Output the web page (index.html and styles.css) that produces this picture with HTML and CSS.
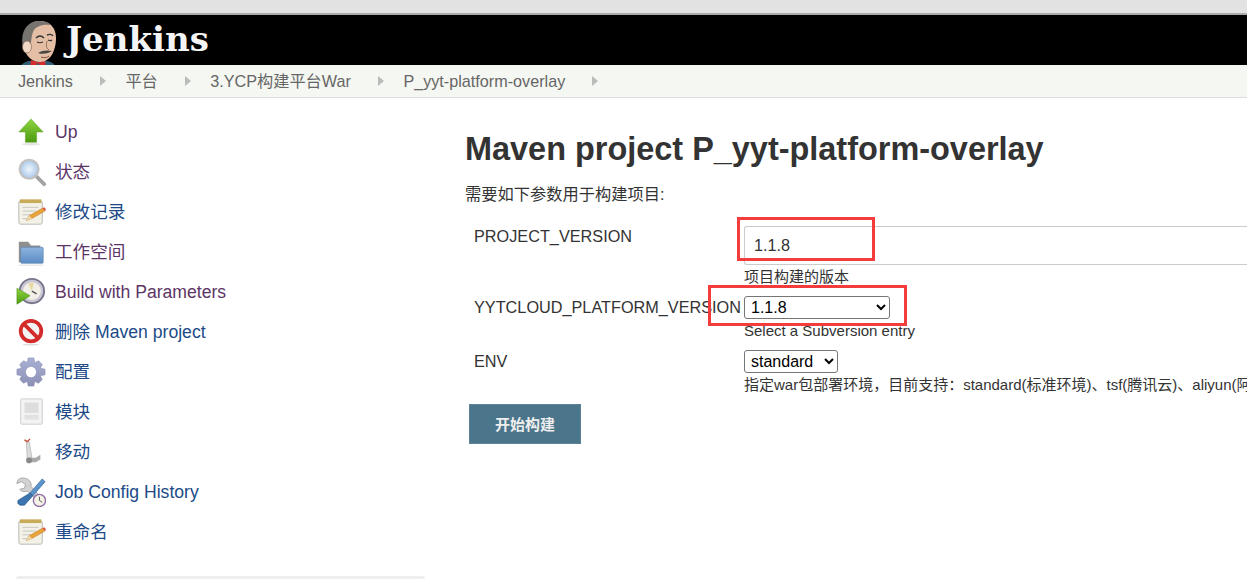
FILE: index.html
```html
<!DOCTYPE html>
<html lang="en">
<head>
  <meta charset="UTF-8" />
  <title>P_yyt-platform-overlay [Jenkins]</title>
  <link rel="stylesheet" href="styles.css">
</head>
<body>
  <div class="chrome"></div>
  <header class="header">
    <svg class="butler" width="40" height="50" viewBox="0 0 40 50">
      <path d="M0 50c0-6 5-9 10-10h18c6 1 9 4 10 10z" fill="#2f5f78"/>
      <path d="M12 39l-1 7 7-2.500 1-2 1 2 7 2.500-1-7-7 2z" fill="#d22d2d"/>
      <path d="M4 20C4 7 11 0 21 0c10 0 16 7 16 17 0 13-6 24-16 24S4 32 4 20z" fill="#e4bfa6"/>
      <path d="M4 26C1 12 7 1 19 0c5 0 10 1 13 4-8-1-14 1-17 5-3 5-2 10-4 17-2 1-5 1-7 0z" fill="#77736f"/>
      <ellipse cx="8" cy="26" rx="4.500" ry="6" fill="#f2d8c6" stroke="#8a6a58" stroke-width=".7"/>
      <path d="M17 17c3-3 6-2 8 0M28 14c2-1 5-1 6 1" fill="none" stroke="#333" stroke-width="1.400"/>
      <path d="M18 21c2 1 4 1 6 0M29 19c2 1 3 1 4 0" fill="none" stroke="#333" stroke-width="1.200"/>
      <path d="M28 20c-1 4-1 7 2 9" fill="none" stroke="#9a6d58" stroke-width="1"/>
      <path d="M19 32c4-3 10-3 14-2-3 2-9 4-14 2z" fill="#4a4644"/>
      <path d="M22 36c3 1 6 1 8-1" fill="none" stroke="#7a4a3a" stroke-width="1"/>
    </svg>
    <span class="brand">Jenkins</span>
  </header>
  <nav class="crumbs">
    <a class="crumb" href="#">Jenkins</a><span class="sep"></span>
    <a class="crumb" href="#">平台</a><span class="sep"></span>
    <a class="crumb" href="#">3.YCP构建平台War</a><span class="sep"></span>
    <a class="crumb" href="#">P_yyt-platform-overlay</a><span class="sep"></span>
  </nav>

  <div class="layout">
    <aside class="side">
      <svg class="defs" width="0" height="0">
        <defs>
          <linearGradient id="green" x1="0" y1="0" x2="0" y2="1"><stop offset="0" stop-color="#8fd63f"/><stop offset="1" stop-color="#4c9a12"/></linearGradient>
          <linearGradient id="blue" x1="0" y1="0" x2="0" y2="1"><stop offset="0" stop-color="#8db4de"/><stop offset="1" stop-color="#5a8cc4"/></linearGradient>
          <radialGradient id="lens"><stop offset="0" stop-color="#eef5fc"/><stop offset="1" stop-color="#a9c8ea"/></radialGradient>
          <linearGradient id="gear" x1="0" y1="0" x2="0" y2="1"><stop offset="0" stop-color="#aab0d6"/><stop offset="1" stop-color="#8d90b4"/></linearGradient>
          <g id="notepad">
            <rect x="3" y="4" width="25" height="25" rx="2" fill="#f4f2e8" stroke="#b5b5b0"/>
            <rect x="4" y="2.500" width="23" height="4" fill="#c9ac5a"/>
            <path d="M7 11h17M7 15h14M7 19h9M7 23h5" stroke="#c4c4bc"/>
            <path d="M11 25l3-5 14-8 3 3-14 8z" fill="#e8a33a" stroke="#b97d20" stroke-width=".5"/>
            <path d="M11 25l3-5 3 3z" fill="#f3d9b0"/>
            <path d="M28 12l3 3 1-2-2-2z" fill="#d9533c"/>
          </g>
        </defs>
      </svg>
      <ul class="tasks">
        <li class="task">
          <svg class="ico" viewBox="0 0 32 32"><path d="M16 2L29 16h-7v11H10V16H3z" fill="url(#green)" stroke="#5c9c1e" stroke-width=".5"/><ellipse cx="16" cy="29" rx="10" ry="1.300" fill="#e4e4e4"/></svg>
          <a class="visited" href="#">Up</a>
        </li>
        <li class="task">
          <svg class="ico" viewBox="0 0 32 32"><path d="M22 21l8 8" stroke="#a3a3a3" stroke-width="4" stroke-linecap="round"/><circle cx="14" cy="13" r="10" fill="url(#lens)" stroke="#c2c2c2" stroke-width="2.500"/></svg>
          <a class="visited" href="#">状态</a>
        </li>
        <li class="task">
          <svg class="ico" viewBox="0 0 32 32"><use href="#notepad"/></svg>
          <a href="#">修改记录</a>
        </li>
        <li class="task">
          <svg class="ico" viewBox="0 0 32 32"><path d="M3 5h10l3 4h10v4H12v14H3z" fill="#8f8f8f"/><rect x="5" y="11" width="24" height="17" rx="1" fill="url(#blue)" stroke="#5b86b5" stroke-width=".7"/><path d="M3 30h26" stroke="#ddd"/></svg>
          <a class="visited" href="#">工作空间</a>
        </li>
        <li class="task">
          <svg class="ico" viewBox="0 0 32 32"><circle cx="17" cy="15" r="13" fill="#c9c6d6" stroke="#77748a" stroke-width="2"/><circle cx="17" cy="15" r="9.500" fill="#f2f0e6"/><path d="M17 15l-4-8 6-1z" fill="#e8d9a0"/><path d="M17 15l5 3" stroke="#555" stroke-width="1.500"/><path d="M1 12l14 8-14 9z" fill="url(#green)" stroke="#4b8f14" stroke-width=".6"/></svg>
          <a class="visited" href="#">Build with Parameters</a>
        </li>
        <li class="task">
          <svg class="ico" viewBox="0 0 32 32"><circle cx="16" cy="15" r="11" fill="#f4f4f4" stroke="#d42a2a" stroke-width="4"/><path d="M8 7l16 16" stroke="#d42a2a" stroke-width="4"/><ellipse cx="16" cy="29.500" rx="9" ry="1" fill="#ddd"/></svg>
          <a href="#">删除 Maven project</a>
        </li>
        <li class="task">
          <svg class="ico" viewBox="0 0 32 32"><path d="M13 1h6l1 5 4-2 4 4-2 4 5 1v6l-5 1 2 4-4 4-4-2-1 5h-6l-1-5-4 2-4-4 2-4-5-1v-6l5-1-2-4 4-4 4 2z" fill="url(#gear)" stroke="#8488b0" stroke-width=".6"/><circle cx="16" cy="16" r="5.500" fill="#fff"/></svg>
          <a href="#">配置</a>
        </li>
        <li class="task">
          <svg class="ico" viewBox="0 0 32 32"><rect x="5" y="2" width="23" height="27" rx="1" fill="#f3f3f3" stroke="#ccc"/><rect x="9" y="6" width="15" height="11" fill="#ddd"/><rect x="9" y="19" width="15" height="5" fill="#e2e2e2"/></svg>
          <a href="#">模块</a>
        </li>
        <li class="task">
          <svg class="ico" viewBox="0 0 32 32"><path d="M11 5l3 0 3 17h-5z" fill="#ddd" stroke="#aaa" stroke-width=".7"/><path d="M9 3l3 2 3-3" fill="none" stroke="#c8503c" stroke-width="1.500"/><path d="M11 22h10l5-3v5l-5 3H11z" fill="#aaa"/><circle cx="14" cy="25" r="3" fill="#888"/></svg>
          <a href="#">移动</a>
        </li>
        <li class="task">
          <svg class="ico" viewBox="0 0 32 32"><path d="M7 1C3 1 1 4 1 7l5-2 4 3-1 4-5 1c2 3 5 3 8 2l12 11 3-4-11-12c1-4-2-9-9-9z" fill="#d2d2d2" stroke="#8c8c8c" stroke-width=".7"/><path d="M28 2l3 3-13 15-3-3z" fill="#5a94cc" stroke="#2f5f90" stroke-width=".7"/><path d="M15 17l3 3-9 10H4l-2-2v-3z" fill="#3c75b0" stroke="#27527f" stroke-width=".7"/><circle cx="25" cy="25" r="6.500" fill="#f5f2e5" stroke="#8f6ca8" stroke-width="1.500"/><path d="M25 21v4l3 2" fill="none" stroke="#555"/></svg>
          <a href="#">Job Config History</a>
        </li>
        <li class="task">
          <svg class="ico" viewBox="0 0 32 32"><use href="#notepad"/></svg>
          <a href="#">重命名</a>
        </li>
      </ul>
      <div class="side-box"></div>
    </aside>

    <main class="main">
      <h1 class="title">Maven project P_yyt-platform-overlay</h1>
      <p class="lead">需要如下参数用于构建项目:</p>
      <div class="params">
        <div class="param-name">PROJECT_VERSION</div>
        <div class="param-value">
          <input class="text-input" type="text" value="1.1.8">
          <div class="help help-first">项目构建的版本</div>
        </div>
        <div class="param-name name-second">YYTCLOUD_PLATFORM_VERSION</div>
        <div class="param-value">
          <select class="pick pick-wide"><option>1.1.8</option></select>
          <div class="help help-first">Select a Subversion entry</div>
        </div>
        <div class="param-name name-third">ENV</div>
        <div class="param-value">
          <select class="pick pick-env"><option>standard</option></select>
          <div class="help help-first nowrap">指定war包部署环境，目前支持：standard(标准环境)、tsf(腾讯云)、aliyun(阿里云)</div>
        </div>
      </div>
      <button class="build" type="button">开始构建</button>
    </main>
  </div>

  <!-- annotations drawn over the screenshot -->
  <div class="mark mark-input"></div>
  <div class="mark mark-select"></div>
</body>
</html>
```

FILE: styles.css
```css
html, body {
  height: 100%;
}
body {
  position: relative;
  margin: 0;
  overflow: hidden;
  background: #fff;
  color: #333;
  font-family: "Liberation Sans", "Noto Sans CJK SC", sans-serif;
  font-size: 16.25px;
}
.chrome {
  height: 13px;
  background: #e2e2e2;
  border-bottom: 2px solid #aaa;
}
.header {
  display: flex;
  height: 50px;
  background: #000;
  overflow: hidden;
}
.butler {
  flex: none;
  margin-left: 19px;
  margin-top: 6px;
}
.brand {
  margin-left: 7px;
  color: #f4f4f4;
  font-family: "DejaVu Serif", serif;
  font-size: 34px;
  font-weight: bold;
  line-height: 48px;
}
.crumbs {
  display: flex;
  align-items: center;
  height: 32px;
  padding-left: 18px;
  background: #f5f7f2;
  border-bottom: 1px solid #ddd;
}
.crumb {
  color: #666;
  font-size: 16.2px;
  line-height: 20px;
  text-decoration: none;
}
.sep {
  width: 0;
  height: 0;
  margin: 0 19.5px 0 27px;
  border-left: 6px solid #bbb;
  border-top: 5px solid transparent;
  border-bottom: 5px solid transparent;
}
.defs {
  position: absolute;
}
.layout {
  display: flex;
}
.side {
  flex: none;
  width: 425px;
  padding-top: 14px;
}
.tasks {
  margin: 0;
  padding: 0 0 0 16px;
  list-style: none;
}
.task {
  display: flex;
  align-items: center;
  height: 40px;
  font-size: 17.6px;
  line-height: 20px;
}
.task a {
  color: #204a87;
  text-decoration: none;
}
.task a.visited {
  color: #5c3566;
}
.ico {
  flex: none;
  width: 30px;
  height: 30px;
  margin-right: 9px;
}
.side-box {
  height: 3px;
  margin: 24px 0 0 16px;
  background: #eee;
  border-radius: 3px 3px 0 0;
}
.main {
  flex: none;
  width: 822px;
  box-sizing: border-box;
  padding-left: 40px;
  padding-top: 31px;
}
.title {
  margin: 0;
  color: #333;
  font-size: 32.45px;
  line-height: 40px;
}
.lead {
  margin: 15px 0 0;
  line-height: 20px;
}
.params {
  display: grid;
  grid-template-columns: 279px 1fr;
  margin-top: 22px;
  margin-right: -40px;
}
.param-name {
  padding-left: 9px;
  line-height: 20px;
  white-space: nowrap;
}
.name-second {
  padding-top: 10px;
}
.name-third {
  padding-top: 10px;
}
.param-value {
  min-width: 0;
}
.text-input {
  display: block;
  width: 100%;
  height: 39px;
  padding: 0 9px;
  box-sizing: border-box;
  border: 1px solid #ccc;
  border-right: 0;
  border-radius: 3px 0 0 3px;
  color: #333;
  font: 16.25px "Liberation Sans", sans-serif;
}
.pick {
  display: block;
  height: 23px;
  margin-top: 9px;
  padding-left: 2px;
  font: 16px "Liberation Sans", sans-serif;
  color: #000;
  background: #fff;
  border: 1px solid #767676;
  border-radius: 3px;
}
.pick-wide {
  width: 146px;
}
.pick-env {
  width: 94px;
}
.help {
  margin-top: 1px;
  color: #333;
  font-size: 15px;
  line-height: 20px;
}
.help-first {
  margin-top: 2px;
}
.nowrap {
  white-space: nowrap;
}
.build {
  display: block;
  width: 112px;
  height: 40px;
  margin: 9px 0 0 4px;
  padding: 0 0 2px;
  background: #4b758b;
  border: 1px solid #5a8398;
  color: #eee;
  font-family: inherit;
  font-size: 15px;
  font-weight: bold;
}
.mark {
  position: absolute;
  box-sizing: border-box;
  border: 3px solid #f33c3c;
}
.mark-input {
  left: 737px;
  top: 217px;
  width: 138px;
  height: 44px;
}
.mark-select {
  left: 708px;
  top: 285px;
  width: 199px;
  height: 41px;
}
```
